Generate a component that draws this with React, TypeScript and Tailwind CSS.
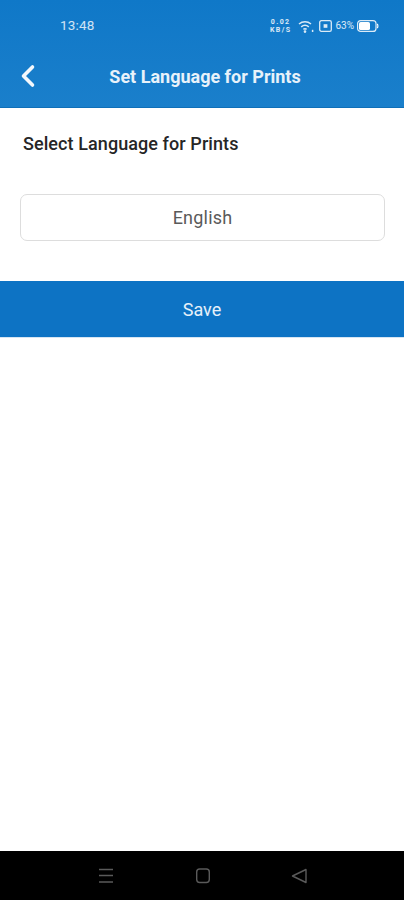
import React from 'react';
import { ChevronLeft } from 'lucide-react';

const App: React.FC = () => {
  return (
    <div className="w-[404px] h-[900px] flex flex-col bg-white font-['Roboto',sans-serif] overflow-hidden">
      {/* header + status bar */}
      <div className="h-[108px] bg-gradient-to-b from-[#0f78c8] to-[#1a7fcb] border-b border-[#0f6fb8] flex flex-col shrink-0">
        <div className="h-[52px] flex items-center pl-[60px] pr-[25px] text-white">
          <span className="text-[13.5px] leading-none text-white/80 tracking-[0.2px]">13:48</span>
          <div className="ml-auto flex items-center">
            {/* data speed */}
            <div className="flex flex-col items-center font-bold text-white/85 mr-[7px] text-[7px] leading-[8.2px] tracking-[1.4px]">
              <span>0.02</span>
              <span>KB/S</span>
            </div>
            {/* wifi */}
            <svg width="16" height="13" viewBox="0 0 16 13" fill="none" stroke="white" strokeWidth="1.5" className="opacity-85 mr-[5px]">
              <path d="M1 4 C4.5 1 9.5 1 13 4" />
              <path d="M3.2 6.8 C5.6 4.8 8.4 4.8 10.8 6.8" />
              <path d="M5.4 9.4 C6.4 8.5 7.6 8.5 8.6 9.4" />
              <circle cx="7" cy="11.6" r="0.6" fill="white" />
              <path d="M14.6 9.8 V12" />
            </svg>
            {/* cast */}
            <svg width="13" height="12" viewBox="0 0 13 12" fill="none" className="opacity-85 mr-[3px]">
              <rect x="0.7" y="0.7" width="11.6" height="10.6" rx="1.6" stroke="white" strokeWidth="1.3" />
              <rect x="4.6" y="4.2" width="3.8" height="3.6" fill="white" />
            </svg>
            <span className="text-[10px] leading-none text-white/85 mr-[3px]">63%</span>
            {/* battery */}
            <svg width="22" height="12" viewBox="0 0 22 12" fill="none">
              <rect x="0.6" y="0.6" width="18.4" height="10.8" rx="3" stroke="white" strokeOpacity="0.85" strokeWidth="1.2" />
              <rect x="2" y="2" width="11" height="8" rx="1.6" fill="white" />
              <path d="M20 4 C21.2 4.4 21.2 7.6 20 8" stroke="white" strokeWidth="1.2" />
            </svg>
          </div>
        </div>
        <div className="relative h-[50px] flex items-center justify-center pl-[6px]">
          <ChevronLeft className="absolute left-[10px] top-[6px] w-[36px] h-[36px] text-white/95" strokeWidth={2.4} />
          <h1 className="text-[18px] font-bold text-white/90 -mt-[1px]">Set Language for Prints</h1>
        </div>
      </div>

      {/* form */}
      <div className="pl-[20px] pr-[19px] pt-[25px] pb-[40px]">
        <p className="pl-[3px] text-[18px] leading-[21px] font-medium text-[#262626] tracking-[0.08px]">Select Language for Prints</p>
        <div className="mt-[40px] h-[47px] rounded-[7px] border-[1.5px] border-[#dddddd] flex items-center justify-center text-[18px] text-[#5a5a5a] tracking-[0.2px]">
          English
        </div>
      </div>

      <div className="h-[57px] bg-[#0d73c4] border-b border-[#d5e5f3] flex items-center justify-center text-[18px] text-white/90 shrink-0">
        Save
      </div>

      <div className="flex-1" />

      {/* android nav bar */}
      <div className="h-[49px] bg-black shrink-0 relative flex items-center justify-center">
        <svg width="240" height="20" viewBox="0 0 240 20" fill="none" stroke="#5a5a5a" strokeWidth="1.4">
          <path d="M17 3.5 H31 M17 9.5 H31 M17 16 H31" />
          <rect x="114.7" y="3" width="12.6" height="13.5" rx="3" />
          <path d="M210.5 10 L224 3.5 V16.5 Z" strokeLinejoin="round" />
        </svg>
      </div>
    </div>
  );
};

export default App;
